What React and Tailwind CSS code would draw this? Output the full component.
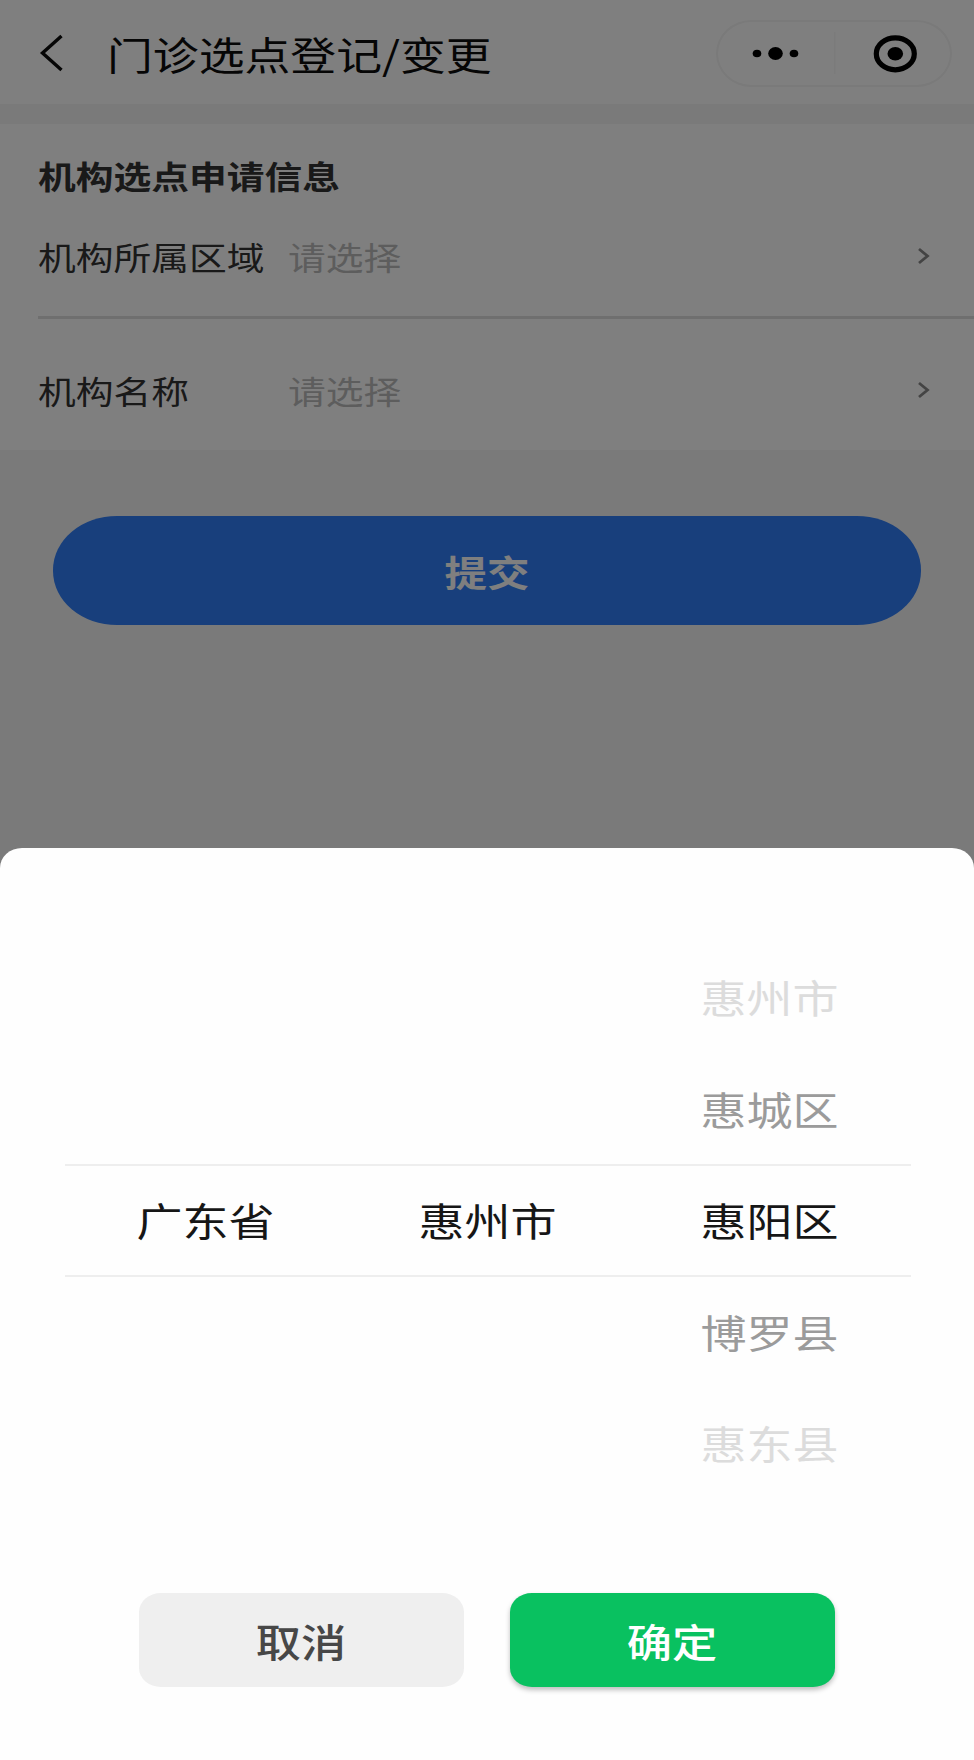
import React, { useState } from "react";

const Header = () => {
  return (
    <header className="flex h-[104px] items-center bg-white pl-[39px] pr-[22px] pt-[2px]">
      <svg className="h-[38px] w-[24px]" viewBox="0 0 24 38" fill="none" stroke="#0c0c0c" strokeWidth="3.4">
        <path d="M22.500 2 L3.500 19 L22.500 36" />
      </svg>
      <h1 className="ml-[44px] origin-left scale-x-[1.175] whitespace-nowrap text-[39px] leading-none text-[#0c0c0c]">
        门诊选点登记/变更
      </h1>
      <div className="ml-auto flex h-[67px] w-[236px] items-center rounded-[36px/34px] border-2 border-[#f4f4f4]">
        <svg className="h-[63px] w-[232px]" viewBox="0 0 232 63" fill="#000">
          <ellipse cx="39" cy="31.5" rx="4.3" ry="3.8" />
          <ellipse cx="57.5" cy="31.5" rx="7.3" ry="6.5" />
          <ellipse cx="76" cy="31.5" rx="4.3" ry="3.8" />
          <rect x="116" y="10" width="1.5" height="42" fill="#f6f6f6" />
          <ellipse cx="177.3" cy="31.8" rx="19" ry="16" fill="none" stroke="#000" strokeWidth="5.2" />
          <ellipse cx="177.3" cy="31.8" rx="7.8" ry="6.7" />
        </svg>
      </div>
    </header>
  );
};

const FormRow = ({ label, placeholder }) => {
  return (
    <div className="flex h-[40px] items-center pr-[44px]">
      <span className="w-[250px] shrink-0 whitespace-nowrap">
        <span className="inline-block origin-left scale-x-[1.18] text-[32px] leading-[40px] text-[#333]">{label}</span>
      </span>
      <span className="inline-block origin-left scale-x-[1.18] text-[32px] leading-[40px] text-[#bbb]">{placeholder}</span>
      <svg className="ml-auto h-[18px] w-[13px]" viewBox="0 0 13 18" fill="none" stroke="#888" strokeWidth="2.8">
        <path d="M2 2 L10.500 9 L2 16" />
      </svg>
    </div>
  );
};

const itemColors = ["text-[#dcdcdc]", "text-[#9b9b9b]", "text-[#161616]", "text-[#9b9b9b]", "text-[#dcdcdc]"];

const PickerColumn = ({ items }) => {
  return (
    <ul className="flex-1">
      {items.map((item, index) => (
        <li key={index} className={`flex h-[111.500px] items-center justify-center text-[39px] leading-none ${itemColors[index]}`}>
          <span className="inline-block scale-x-[1.18] whitespace-nowrap">{item}</span>
        </li>
      ))}
    </ul>
  );
};

const App = () => {
  const [showPicker, setShowPicker] = useState(true);

  // five visible slots per column, the middle one is selected
  const columns = [
    ["", "", "广东省", "", ""],
    ["", "", "惠州市", "", ""],
    ["惠州市", "惠城区", "惠阳区", "博罗县", "惠东县"],
  ];

  return (
    <div className="relative h-[1760px] w-[974px] overflow-hidden bg-[#f5f5f5] font-['Noto_Sans_CJK_SC',sans-serif]">
      <Header />

      <section className="mt-[20px] h-[326px] bg-white pl-[38px] pt-[31px]">
        <h2 className="origin-left scale-x-[1.18] whitespace-nowrap text-[32px] font-bold leading-[40px] text-[#333]">
          机构选点申请信息
        </h2>
        <div className="pt-[41px]">
          <FormRow label="机构所属区域" placeholder="请选择" />
        </div>
        <div className="mt-[40px] h-[2.500px] bg-[#dfdfdf]" />
        <div className="pt-[51px]">
          <FormRow label="机构名称" placeholder="请选择" />
        </div>
      </section>

      <div className="px-[53px] pt-[66px]">
        <button
          className="flex h-[109px] w-full items-center justify-center rounded-[64px/54px] bg-[#307ef8] text-[36px] font-bold leading-none text-white"
          onClick={() => setShowPicker(true)}
        >
          <span className="inline-block scale-x-[1.18]">提交</span>
        </button>
      </div>

      {showPicker && (
        <div className="absolute inset-0 flex flex-col justify-end bg-black/50">
          <div className="h-[912px] rounded-[22px_22px_0_0/20px_20px_0_0] bg-[#fefefe] pt-[93px]">
            <div className="relative ml-[65px] mr-[63px] flex">
              {columns.map((items, index) => (
                <PickerColumn key={index} items={items} />
              ))}
              <div className="pointer-events-none absolute inset-x-0 top-[223px] h-[113px] border-y-2 border-[#eee]" />
            </div>
            <div className="flex gap-[46px] pl-[139px] pt-[94px] text-[39px] font-medium leading-none">
              <button
                className="flex h-[94px] w-[325px] items-center justify-center rounded-[22px/19px] bg-[#efefef] pt-[2px] text-[#474747]"
                onClick={() => setShowPicker(false)}
              >
                <span className="inline-block scale-x-[1.16]">取消</span>
              </button>
              <button
                className="flex h-[94px] w-[325px] items-center justify-center rounded-[22px/19px] bg-[#09c160] pt-[2px] text-white shadow-[0_3px_5px_rgba(0,0,0,0.25)]"
                onClick={() => setShowPicker(false)}
              >
                <span className="inline-block scale-x-[1.16]">确定</span>
              </button>
            </div>
          </div>
        </div>
      )}
    </div>
  );
};

export default App;
